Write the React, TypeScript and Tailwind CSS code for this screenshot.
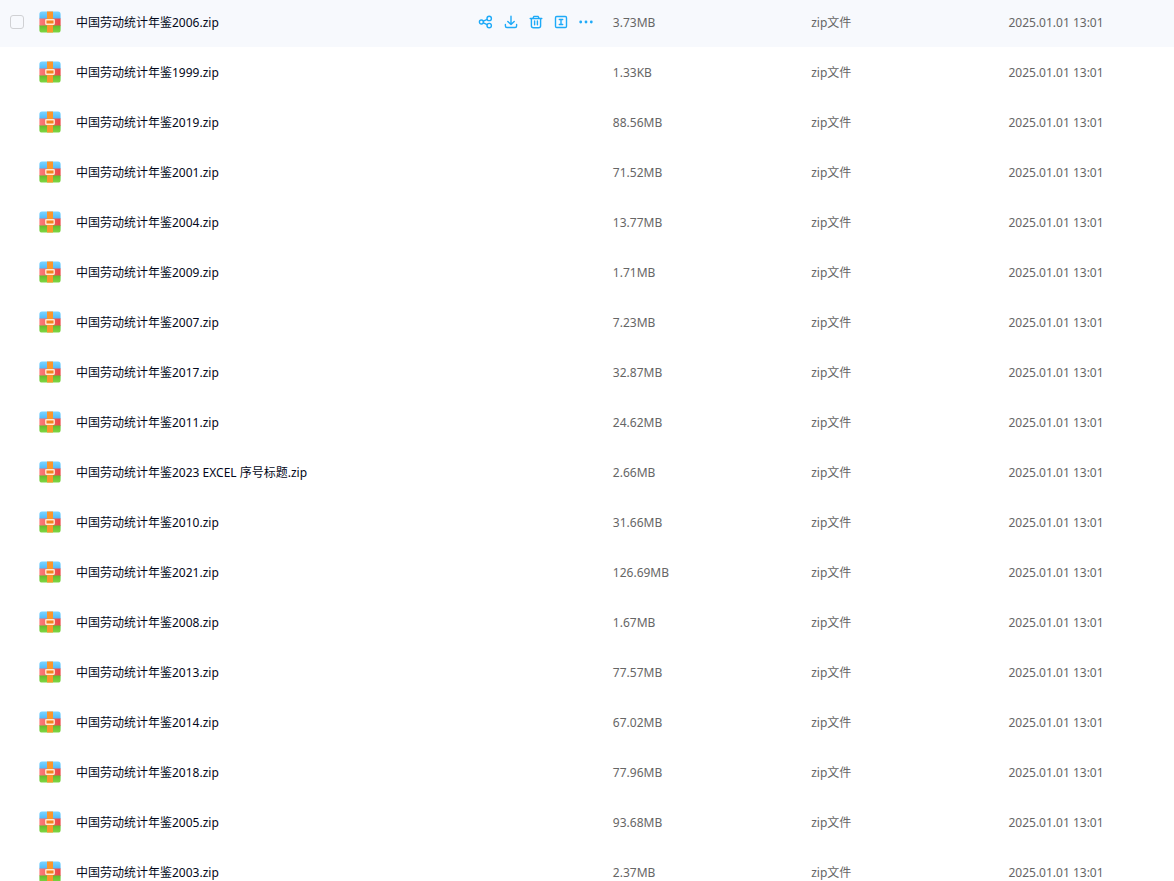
import { useState } from "react";

type ZipFile = {
  name: string;
  size: string;
};

const files: ZipFile[] = [
  { name: "中国劳动统计年鉴2006.zip", size: "3.73MB" },
  { name: "中国劳动统计年鉴1999.zip", size: "1.33KB" },
  { name: "中国劳动统计年鉴2019.zip", size: "88.56MB" },
  { name: "中国劳动统计年鉴2001.zip", size: "71.52MB" },
  { name: "中国劳动统计年鉴2004.zip", size: "13.77MB" },
  { name: "中国劳动统计年鉴2009.zip", size: "1.71MB" },
  { name: "中国劳动统计年鉴2007.zip", size: "7.23MB" },
  { name: "中国劳动统计年鉴2017.zip", size: "32.87MB" },
  { name: "中国劳动统计年鉴2011.zip", size: "24.62MB" },
  { name: "中国劳动统计年鉴2023 EXCEL 序号标题.zip", size: "2.66MB" },
  { name: "中国劳动统计年鉴2010.zip", size: "31.66MB" },
  { name: "中国劳动统计年鉴2021.zip", size: "126.69MB" },
  { name: "中国劳动统计年鉴2008.zip", size: "1.67MB" },
  { name: "中国劳动统计年鉴2013.zip", size: "77.57MB" },
  { name: "中国劳动统计年鉴2014.zip", size: "67.02MB" },
  { name: "中国劳动统计年鉴2018.zip", size: "77.96MB" },
  { name: "中国劳动统计年鉴2005.zip", size: "93.68MB" },
  { name: "中国劳动统计年鉴2003.zip", size: "2.37MB" },
];

const actions = [
  {
    label: "分享",
    icon: (
      <>
        <circle cx="3.4" cy="8" r="2" />
        <circle cx="11.2" cy="4.4" r="2.2" />
        <circle cx="11.2" cy="11.6" r="2.2" />
        <path d="M5.4 7.2 9.1 5.4M5.4 8.8l3.7 1.8" />
      </>
    ),
  },
  {
    label: "下载",
    icon: <path d="M8 2.2v8.3M4.8 7.4 8 10.6l3.2-3.2M2.4 10.4v1.6q0 1.5 1.5 1.5h8.2q1.5 0 1.5-1.5v-1.6" />,
  },
  {
    label: "删除",
    icon: <path d="M2.2 4.5h11.6M5 4.3l.8-1.9h4.4l.8 1.9M3.4 4.7v7.1q0 2 2 2h5.2q2 0 2-2V4.7M6.6 7v3.8M9.4 7v3.8" />,
  },
  {
    label: "重命名",
    icon: (
      <>
        <rect x="2.5" y="2.5" width="11" height="11" rx="1.2" />
        <path d="M6.3 5.5h3.4M6.3 10.5h3.4M8 5.5v5" />
      </>
    ),
  },
  {
    label: "更多",
    icon: (
      <g fill="currentColor" stroke="none">
        <circle cx="2.7" cy="8" r="1.4" />
        <circle cx="8" cy="8" r="1.4" />
        <circle cx="13.3" cy="8" r="1.4" />
      </g>
    ),
  },
];

function ZipIcon() {
  return (
    <svg viewBox="0 0 22 22" className="size-[22px] shrink-0" aria-hidden="true">
      <defs>
        <clipPath id="zip-shape">
          <rect x="0.4" y="0.4" width="21.2" height="21.2" rx="2.6" />
        </clipPath>
        <linearGradient id="zip-blue" x1="0" y1="0" x2="0" y2="1">
          <stop offset="0" stopColor="#7fd6ff" />
          <stop offset="1" stopColor="#4fb8f6" />
        </linearGradient>
        <linearGradient id="zip-red" x1="0" y1="0" x2="1" y2="0">
          <stop offset="0" stopColor="#fb7d7d" />
          <stop offset="1" stopColor="#ea4545" />
        </linearGradient>
        <linearGradient id="zip-green" x1="0" y1="0" x2="0" y2="1">
          <stop offset="0" stopColor="#62bd2c" />
          <stop offset="1" stopColor="#80d844" />
        </linearGradient>
      </defs>
      <g clipPath="url(#zip-shape)">
        <rect width="22" height="8" fill="url(#zip-blue)" />
        <rect y="7.5" width="22" height="7.5" fill="url(#zip-red)" />
        <rect y="14.5" width="22" height="7.5" fill="url(#zip-green)" />
        <rect x="8" width="6" height="22" fill="#fb962b" />
      </g>
      <rect x="6.8" y="8.8" width="8.4" height="4.4" rx="0.4" fill="#f58220" stroke="#ffe9d0" strokeWidth="1.4" />
    </svg>
  );
}

function FileRow({ file, active }: { file: ZipFile; active: boolean }) {
  const [checked, setChecked] = useState(false);

  return (
    <tr className={active ? "h-[50px] bg-[#f7f9fd]" : "h-[50px]"}>
      <td className="p-0">
        <div className="flex items-center pr-[19px] pl-[10px]">
          <div className="flex w-[29px] shrink-0 items-center">
            {active && (
              <input
                type="checkbox"
                aria-label={file.name}
                checked={checked}
                onChange={(e) => setChecked(e.target.checked)}
                className="size-[14px] appearance-none rounded-[3px] border border-[#d0d1d4] checked:bg-[#06a7ff]"
              />
            )}
          </div>
          <ZipIcon />
          <a href="#" className="ml-[15px] flex-1 truncate pt-[2px] text-[#03081a]">
            {file.name}
          </a>
          {active && (
            <div className="flex items-center gap-[9px] text-[#1eaaf8]">
              {actions.map(({ label, icon }) => (
                <button key={label} type="button" aria-label={label}>
                  <svg
                    viewBox="0 0 16 16"
                    className="size-4"
                    fill="none"
                    stroke="currentColor"
                    strokeWidth="1.4"
                    strokeLinecap="round"
                    strokeLinejoin="round"
                  >
                    {icon}
                  </svg>
                </button>
              ))}
            </div>
          )}
        </div>
      </td>
      <td className="p-0 pt-[2px]">{file.size}</td>
      <td className="p-0 pt-[2px]">zip文件</td>
      <td className="p-0 pt-[2px]">2025.01.01 13:01</td>
    </tr>
  );
}

export default function App() {
  return (
    <main className="h-screen overflow-hidden bg-white font-['Noto_Sans','Noto_Sans_CJK_SC',sans-serif] text-xs text-[#666]">
      {/* the list is scrolled slightly past the top of its first row */}
      <table className="-mt-[3px] w-full table-fixed border-collapse">
        <colgroup>
          <col className="w-[52.2%]" />
          <col className="w-[16.9%]" />
          <col className="w-[16.8%]" />
          <col className="w-[14.1%]" />
        </colgroup>
        <tbody>
          {files.map((file, i) => (
            <FileRow key={file.name} file={file} active={i === 0} />
          ))}
        </tbody>
      </table>
    </main>
  );
}
